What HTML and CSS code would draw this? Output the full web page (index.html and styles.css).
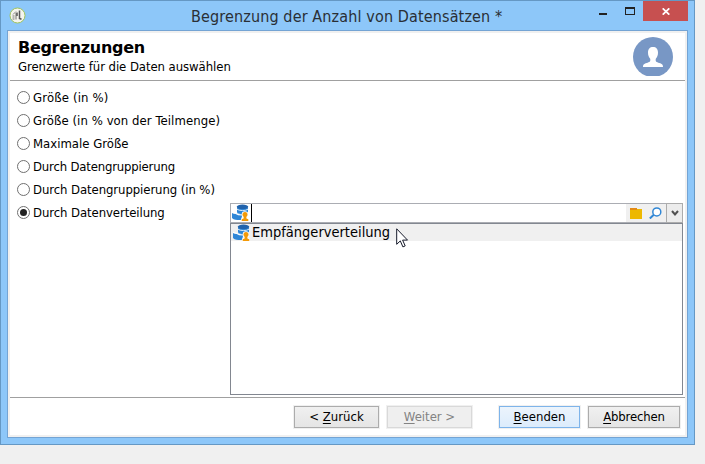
FILE: index.html
```html
<!DOCTYPE html>
<html lang="de">
<head>
<meta charset="utf-8">
<title>Begrenzung der Anzahl von Datensätzen</title>
<link rel="stylesheet" href="styles.css">
</head>
<body>
<svg width="0" height="0" class="defs">
  <symbol id="dist" viewBox="0 0 17 18">
    <path d="M0 9v4.500C0 15 2.500 16 5.500 16H9l1.500-6z" fill="#2f86d6"/>
    <path d="M5 3.500V8c0 1.500 3 2 5.500 2s5.500-.5 5.500-2V3.500z" fill="#2f86d6"/>
    <ellipse cx="10.500" cy="2.800" rx="5.700" ry="2.300" fill="#2163ac"/>
    <path d="M5 5.200c2 1.700 8.500 2 11 0" fill="none" stroke="#d5e8f8"/>
    <path d="M0 8.200c1 .8 2 1.200 4 1.300 1.500 1.300 3.500 1.500 6 1.500" fill="none" stroke="#fff" stroke-width="1.200"/>
    <g fill="#f39a08" stroke="#fff" stroke-width="1.600" paint-order="stroke">
      <path d="M11.600 11.500h2.800v3l1.900.8V17H9.700v-1.700l1.900-.8z"/>
      <circle cx="13" cy="10.500" r="2.500"/>
      <path d="M11.800 12h2.400v2h-2.400z" stroke="none"/>
    </g>
  </symbol>
</svg>
<div class="window">
  <header class="titlebar">
    <svg class="app" width="17" height="17" viewBox="0 0 17 17"><circle cx="8.500" cy="8.500" r="7.500" fill="#f5f5ee" stroke="#a1c45a"/><path d="M4.500 8v5M7 6v6.500" stroke="#b5b5b0" stroke-width="2"/><path d="M7 4.500L4 7.500" stroke="#888"/><path d="M10.500 3.500v8l2 .8M8 5.500v3.500" fill="none" stroke="#555" stroke-width="1.500"/></svg>
    <h1 class="title">Begrenzung der Anzahl von Datensätzen *</h1>
    <svg class="min" width="8" height="2"><path d="M0 0h8v2H0z" fill="#222"/></svg>
    <svg class="max" width="10" height="8"><path fill-rule="evenodd" d="M0 0h10v8H0zM1 2v5h8V2z" fill="#222"/></svg>
    <div class="close"><svg width="8" height="7" viewBox="0 0 8 7"><path d="M.7.300l6.600 6.400M7.300.300L.7 6.700" stroke="#fff" stroke-width="1.700"/></svg></div>
  </header>
  <main class="panel">
    <section class="head">
      <div><h2>Begrenzungen</h2><p>Grenzwerte für die Daten auswählen</p></div>
      <svg class="avatar" width="40" height="39" viewBox="0 0 40 39"><circle cx="20" cy="20" r="20" fill="#7897c5"/><path d="M20 10c3.200 0 5 2 5 5.500 0 3-.8 4.500-2.200 6.200-.6 3 .7 3.300 3.500 4.200 2.400.8 3.700 1.200 3.700 4.100H10c0-2.900 1.300-3.300 3.700-4.100 2.800-.9 4.100-1.200 3.500-4.200C15.800 20 15 18.500 15 15.500c0-3.500 1.800-5.500 5-5.500z" fill="#fff"/></svg>
    </section>
    <section class="content">
      <div class="options">
        <div class="opt"><i class="radio"></i><span class="wide">Größe (in %)</span></div>
        <div class="opt"><i class="radio"></i><span class="wider">Größe (in % von der Teilmenge)</span></div>
        <div class="opt"><i class="radio"></i><span>Maximale Größe</span></div>
        <div class="opt"><i class="radio"></i><span class="tighter">Durch Datengruppierung</span></div>
        <div class="opt"><i class="radio"></i><span class="tight">Durch Datengruppierung (in %)</span></div>
        <div class="opt"><i class="radio on"></i><span class="tight">Durch Datenverteilung</span></div>
      </div>
      <div class="picker">
        <div class="combo">
          <svg class="dicon" width="17" height="18"><use href="#dist"/></svg><i class="caret"></i>
          <div class="tools">
            <svg width="12" height="11"><path d="M0 0h7v2H0z" fill="#e38b16"/><path d="M0 2h7V1h5v10H0z" fill="#edb800"/></svg>
            <svg width="13" height="12"><circle cx="7.800" cy="4.900" r="4" fill="#fff" stroke="#3187d5" stroke-width="1.500"/><path d="M4.800 7.800L.8 11.500" stroke="#3187d5" stroke-width="2"/></svg>
          </div>
          <div class="drop"><svg width="8" height="7"><path d="M1 1l3 3.500L7 1" fill="none" stroke="#505050" stroke-width="2"/></svg></div>
        </div>
        <div class="list"><div class="item"><svg width="17" height="18"><use href="#dist"/></svg><span>Empfängerverteilung</span></div></div>
        <svg class="cursor" width="13" height="20" viewBox="0 0 13 20"><path d="M.7.800v15.500l3.600-3.400 2.600 6 2.300-1-2.600-5.800h4.900z" fill="#fff" stroke="#161a2a"/></svg>
      </div>
    </section>
    <footer class="foot">
      <div class="btn back"><span>&lt; <u>Z</u>urück</span></div>
      <div class="btn next"><span><u>W</u>eiter &gt;</span></div>
      <div class="btn done"><span><u>B</u>eenden</span></div>
      <div class="btn cancel"><span><u>A</u>bbrechen</span></div>
    </footer>
  </main>
</div>
</body>
</html>
```
FILE: styles.css
```css
* { box-sizing: border-box; }
body { margin: 0; height: 464px; background: #f0f0f0; overflow: hidden; font: 13px "DejaVu Sans Condensed", "DejaVu Sans", sans-serif; font-stretch: condensed; color: #000; }
h1, h2, p { margin: 0; white-space: nowrap; }
svg { display: block; flex: none; }
.defs { position: absolute; }
.window { width: 695px; height: 445px; border: 1px solid #6598c4; background: #8dc7f9; padding: 0 6px 6px; display: flex; flex-direction: column; }
.titlebar { height: 29px; flex: none; display: flex; align-items: flex-start; }
.app { margin: 6px 0 0 2px; }
.title { margin: 5px 0 0 165px; width: 312px; font-size: 16px; line-height: 22px; font-weight: 400; letter-spacing: .13px; color: #2a2f35; }
.min { margin: 12px 0 0 96px; }
.max { margin: 6px 0 0 18px; }
.close { margin-left: 8px; width: 45px; height: 20px; background: #c75050; display: grid; place-items: center; }
.panel { flex: 1; min-height: 0; border: 1px solid #74a4d4; box-shadow: inset 0 0 0 2px #f0f0f0; padding: 2px; background: #fff; display: flex; flex-direction: column; }
.head { height: 48px; flex: none; border-bottom: 1px solid #a0a0a0; padding: 4px 12px 0 8px; display: flex; justify-content: space-between; }
.head h2 { font-family: "DejaVu Sans", sans-serif; font-stretch: normal; font-size: 16px; line-height: 22px; font-weight: 700; letter-spacing: -.3px; }
.head p { line-height: 18px; margin-top: -1px; letter-spacing: -.06px; }
.content { height: 316px; flex: none; display: flex; }
.options { width: 220px; flex: none; padding: 5px 0 0 7px; }
.opt { height: 23px; display: flex; align-items: center; gap: 3px; white-space: nowrap; }
.wide { letter-spacing: .15px; }
.wider { letter-spacing: .07px; }
.tight { letter-spacing: -.08px; }
.tighter { letter-spacing: -.18px; }
.radio { width: 13px; height: 13px; border: 1px solid #707070; border-radius: 50%; background: #fff; flex: none; display: grid; place-items: center; }
.on::after { content: ""; width: 7px; height: 7px; border-radius: 50%; background: #222; }
.picker { width: 453px; padding-top: 122px; position: relative; }
.combo { height: 20px; border: 1px solid #abadb3; display: flex; background: #fff; }
.dicon { margin-left: 1px; }
.caret { width: 1px; height: 18px; margin-left: 2px; background: #000; }
.tools { margin-left: auto; width: 40px; background: #f0f0f0; display: flex; align-items: center; gap: 7px; padding-left: 4px; }
.drop { width: 17px; height: 20px; margin: -1px -1px 0 0; border: 1px solid #acacac; background: #ececec; display: grid; place-items: center; }
.list { height: 172px; border: 1px solid #828790; background: #fff; }
.item { height: 17px; background: #f0f0f0; padding-left: 2px; display: flex; align-items: center; gap: 2px; font-size: 14.500px; line-height: 17px; letter-spacing: 0; }
.cursor { position: absolute; left: 166px; top: 147px; }
.foot { flex: 1; border-top: 1px solid #a0a0a0; padding: 8px 5px 0 0; display: flex; justify-content: flex-end; }
.btn { height: 22px; border: 1px solid #acacac; background: linear-gradient(#f0f0f0, #e5e5e5); box-shadow: 0 0 0 1px #f0f0f0; display: grid; place-items: center; line-height: 20px; white-space: nowrap; }
.btn u { text-underline-offset: 2px; }
.back { width: 85px; margin-right: 8px; }
.next { width: 85px; margin-right: 27px; color: #838383; border-color: #d9d9d9; background: #efefef; }
.done { width: 81px; margin-right: 8px; border-color: #7eb4ea; background: linear-gradient(#ecf4fc, #dcecfc); }
.cancel { width: 92px; letter-spacing: -.15px; }
```
